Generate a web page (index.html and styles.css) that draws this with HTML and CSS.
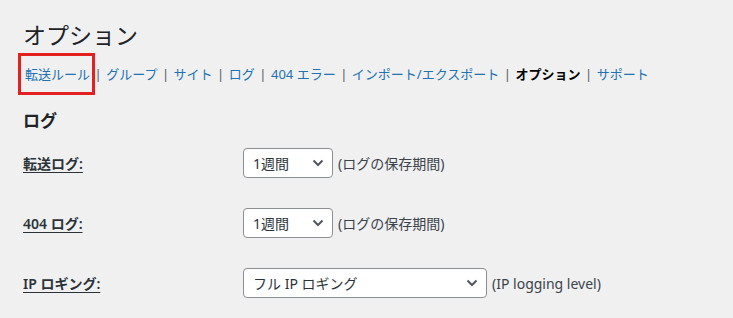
FILE: index.html
```html
<!DOCTYPE html>
<html lang="ja">
<head>
<meta charset="utf-8">
<title>オプション</title>
<link rel="stylesheet" href="styles.css">
</head>
<body>
<div class="wrap">
  <h1 class="page-title">オプション</h1>
  <ul class="subnav">
    <li><a class="nav-link highlighted" href="#">転送ルール</a><span class="sep">|</span></li>
    <li><a class="nav-link" href="#">グループ</a><span class="sep">|</span></li>
    <li><a class="nav-link" href="#">サイト</a><span class="sep">|</span></li>
    <li><a class="nav-link" href="#">ログ</a><span class="sep">|</span></li>
    <li><a class="nav-link" href="#">404 エラー</a><span class="sep">|</span></li>
    <li><a class="nav-link" href="#">インポート/エクスポート</a><span class="sep">|</span></li>
    <li><a class="nav-link current" href="#">オプション</a><span class="sep">|</span></li>
    <li><a class="nav-link" href="#">サポート</a></li>
  </ul>

  <h2 class="section-title">ログ</h2>

  <div class="form-table">
    <div class="form-row">
      <div class="form-label"><label>転送ログ:</label></div>
      <div class="form-field">
        <div class="select small"><span>1週間</span><svg class="chev" viewBox="0 0 12 8" width="12" height="8"><path d="M1.5 1.5 L6 6 L10.5 1.5" fill="none" stroke="#50575e" stroke-width="2"/></svg></div>
        <span class="desc">(ログの保存期間)</span>
      </div>
    </div>
    <div class="form-row">
      <div class="form-label"><label>404 ログ:</label></div>
      <div class="form-field">
        <div class="select small"><span>1週間</span><svg class="chev" viewBox="0 0 12 8" width="12" height="8"><path d="M1.5 1.5 L6 6 L10.5 1.5" fill="none" stroke="#50575e" stroke-width="2"/></svg></div>
        <span class="desc">(ログの保存期間)</span>
      </div>
    </div>
    <div class="form-row">
      <div class="form-label"><label>IP ロギング:</label></div>
      <div class="form-field">
        <div class="select wide"><span>フル IP ロギング</span><svg class="chev" viewBox="0 0 12 8" width="12" height="8"><path d="M1.5 1.5 L6 6 L10.5 1.5" fill="none" stroke="#50575e" stroke-width="2"/></svg></div>
        <span class="desc">(IP logging level)</span>
      </div>
    </div>
  </div>
</div>
</body>
</html>
```

FILE: styles.css
```css
html, body {
  margin: 0;
  padding: 0;
  background: #f0f0f1;
}
body {
  font-family: "Noto Sans", "Noto Sans CJK JP", sans-serif;
  color: #1d2327;
  font-size: 14px;
}
.wrap {
  padding: 0 0 0 23px;
}
.page-title {
  margin: 0;
  padding-top: 20px;
  font-size: 23px;
  font-weight: 400;
  line-height: 30px;
  color: #1d2327;
}
.subnav {
  list-style: none;
  margin: 0;
  padding: 0;
  display: flex;
  margin-top: 14px;
  font-size: 13px;
  line-height: 20px;
  height: 20px;
}
.subnav li {
  display: flex;
  align-items: center;
}
.nav-link {
  color: #2271b1;
  text-decoration: none;
}
.nav-link.current {
  color: #000;
  font-weight: 700;
}
.nav-link.highlighted {
  outline: 3px solid #e22020;
  outline-offset: 0;
  padding: 8px 2px 8px 4px;
  margin-left: -2px;
  margin-right: -2px;
}
.sep {
  color: #50575e;
  margin: 0 4.5px;
}
.section-title {
  margin: 0;
  margin-top: 27px;
  font-size: 17px;
  font-weight: 700;
  line-height: 20px;
  color: #1d2327;
}
.form-table {
  margin-top: 2px;
}
.form-row {
  display: flex;
  height: 60px;
  align-items: center;
}
.form-label {
  width: 220px;
  flex: none;
}
.form-label label {
  font-weight: 600;
  color: #2c3338;
  text-decoration: underline;
  text-underline-offset: 3px;
}
.form-field {
  display: flex;
  align-items: center;
  gap: 5px;
}
.select {
  box-sizing: border-box;
  height: 30px;
  background: #fff;
  border: 1px solid #8c8f94;
  border-radius: 4px;
  display: flex;
  align-items: center;
  justify-content: space-between;
  padding: 0 8px 0 9px;
  color: #2c3338;
  font-size: 14px;
}
.select.small { width: 90px; }
.select.wide { width: 244px; }
.chev { flex: none; }
.desc {
  color: #3c434a;
  font-size: 14px;
}
```
